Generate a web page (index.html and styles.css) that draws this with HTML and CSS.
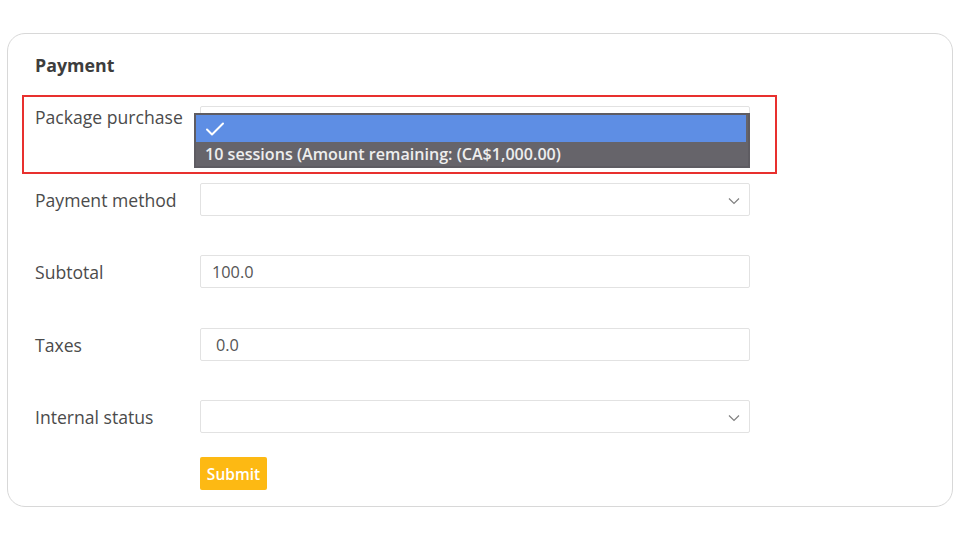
FILE: index.html
```html
<!DOCTYPE html>
<html>
<head>
<meta charset="utf-8">
<link rel="stylesheet" href="styles.css">
</head>
<body>
<div class="card">
  <h2 class="title">Payment</h2>
  <div class="highlight"></div>
  <div class="row row-top">
    <label class="label">Package purchase</label>
    <div class="field select">
      <div class="dropdown">
        <div class="opt opt-selected">
          <svg class="check" width="20" height="16" viewBox="0 0 20 16"><polyline points="2,8.5 7,13.5 18,2.5" fill="none" stroke="#fff" stroke-width="2" stroke-linecap="round" stroke-linejoin="round"/></svg>
        </div>
        <div class="opt opt-item">10 sessions (Amount remaining: (CA$1,000.00)</div>
      </div>
    </div>
  </div>
  <div class="row">
    <label class="label">Payment method</label>
    <div class="field select">
      <svg class="chev" width="12" height="8" viewBox="0 0 12 8"><polyline points="1,1.5 6,6.5 11,1.5" fill="none" stroke="#808080" stroke-width="1.2"/></svg>
    </div>
  </div>
  <div class="row">
    <label class="label">Subtotal</label>
    <div class="field input">100.0</div>
  </div>
  <div class="row row-wide-gap">
    <label class="label">Taxes</label>
    <div class="field input input-wide">0.0</div>
  </div>
  <div class="row">
    <label class="label">Internal status</label>
    <div class="field select">
      <svg class="chev" width="12" height="8" viewBox="0 0 12 8"><polyline points="1,1.5 6,6.5 11,1.5" fill="none" stroke="#808080" stroke-width="1.2"/></svg>
    </div>
  </div>
  <div class="actions">
    <button class="submit">Submit</button>
  </div>
</div>
</body>
</html>
```

FILE: styles.css
```css
html, body {
  margin: 0;
  padding: 0;
  background: #ffffff;
}
body {
  font-family: "Open Sans", "Noto Sans", sans-serif;
  color: #4a4a4a;
}
.card {
  position: relative;
  box-sizing: border-box;
  margin: 33px 0 0 7px;
  width: 946px;
  height: 474px;
  border: 1px solid #d8d8d8;
  border-radius: 18px;
  padding: 19px 0 0 27px;
}
.title {
  margin: 0;
  font-size: 17.8px;
  line-height: 24px;
  font-weight: 700;
  color: #3d3d3d;
}
.highlight {
  position: absolute;
  left: 14px;
  top: 61px;
  width: 755px;
  height: 79px;
  box-sizing: border-box;
  border: 2px solid #e8302e;
}
.row {
  display: flex;
  align-items: center;
  margin-top: 39px;
}
.row-wide-gap {
  margin-top: 40px;
}
.row-top {
  align-items: flex-start;
  margin-top: 29px;
  padding-bottom: 5px;
}
.label {
  width: 165px;
  flex: none;
  font-size: 17.6px;
  line-height: 22px;
  color: #4b4b4b;
}
.field {
  position: relative;
  box-sizing: border-box;
  width: 550px;
  height: 33px;
  border: 1px solid #e2e2e2;
  border-radius: 2px;
  background: #fff;
}
.input {
  display: flex;
  align-items: center;
  padding-left: 11px;
  font-size: 16.3px;
  color: #555;
}
.input-wide {
  padding-left: 15px;
}
.chev {
  position: absolute;
  right: 9px;
  top: 13px;
}
.dropdown {
  position: absolute;
  left: -7px;
  top: 6px;
  width: 556px;
  box-sizing: border-box;
  border: 2px solid #5e5c62;
  background: #66646a;
}
.opt {
  box-sizing: border-box;
  display: flex;
  align-items: center;
}
.opt-selected {
  height: 27px;
  margin-right: 2px;
  background: #5e8ee4;
  padding-left: 9px;
}
.opt-item {
  height: 24px;
  padding-left: 9px;
  font-size: 16.1px;
  font-weight: 600;
  color: #eeeeee;
}
.actions {
  margin: 24px 0 0 165px;
}
.submit {
  display: block;
  box-sizing: border-box;
  width: 67px;
  height: 33px;
  padding: 0;
  border: none;
  border-radius: 2px;
  background: #fdb913;
  color: #fff;
  font-family: "Open Sans", "Noto Sans", sans-serif;
  font-size: 15.5px;
  font-weight: 600;
}
```
